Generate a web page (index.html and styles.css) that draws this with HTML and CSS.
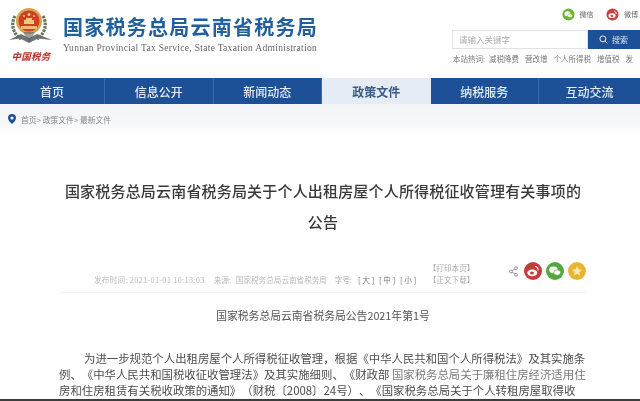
FILE: index.html
```html
<!DOCTYPE html>
<html lang="zh-CN">
<head>
<meta charset="utf-8">
<title>国家税务总局云南省税务局</title>
<link rel="stylesheet" href="styles.css">
</head>
<body>
<div class="page">
  <header class="header">
    <div class="brand">
      <div class="logo">
        <svg class="emblem" viewBox="0 0 44 40" width="44" height="40">
          <path d="M0 33 L12 27 L20 31 L28 27 L43 33 L29 31.500 L20 36 L11 31.500 Z" fill="#6f7478"/>
          <path d="M6 9 C2 16 3 26 12 32 M34 9 C38 16 37 26 28 32" fill="none" stroke="#66735a" stroke-width="3.200" stroke-dasharray="2.500 1"/>
          <circle cx="20" cy="14" r="13" fill="#d9a24c"/>
          <circle cx="20" cy="14" r="10.500" fill="#cf3f27"/>
          <path d="M12 19h16v3H12z" fill="#e8c06a"/>
          <path d="M15 17v-4h10v4zM17 13v-2h6v2z" fill="#eec877"/>
          <circle cx="20" cy="7.500" r="1.500" fill="#f2d27f"/>
          <circle cx="15" cy="9" r=".9" fill="#f2d27f"/>
          <circle cx="25" cy="9" r=".9" fill="#f2d27f"/>
          <path d="M14 25 L20 36 L26 25 Z" fill="#5d6468" opacity=".6"/>
        </svg>
        <div class="slogan">中国税务</div>
      </div>
      <div class="brand-text">
        <div class="brand-title">国家税务总局云南省税务局</div>
        <div class="brand-en">Yunnan Provincial Tax Service, State Taxation Administration</div>
      </div>
    </div>
    <div class="tools">
      <div class="social">
        <span class="social-item">
          <svg class="social-icon" viewBox="0 0 14 14"><circle cx="7" cy="7" r="6.500" fill="#6cb52f"/><ellipse cx="6" cy="6.200" rx="3.400" ry="2.700" fill="#fff"/><ellipse cx="8.600" cy="8.200" rx="2.700" ry="2.100" fill="#fff" stroke="#6cb52f" stroke-width=".6"/></svg>
          微信
        </span>
        <span class="social-item">
          <svg class="social-icon" viewBox="0 0 14 14"><circle cx="7" cy="7" r="6.500" fill="#c9403f"/><ellipse cx="6.500" cy="8.300" rx="3.800" ry="2.600" fill="#fff"/><ellipse cx="6.300" cy="8.500" rx="1.500" ry="1.200" fill="#c9403f"/><path d="M8.500 3.500c1.500 0 2.700 1.200 2.500 3" fill="none" stroke="#fff"/></svg>
          微博
        </span>
      </div>
      <div class="search">
        <div class="search-input">请输入关键字</div>
        <div class="search-btn">
          <svg viewBox="0 0 10 10" width="9" height="9"><circle cx="4.300" cy="4.300" r="3.300" fill="none" stroke="#fff" stroke-width="1"/><path d="M6.800 6.800L9.300 9.300" stroke="#fff" stroke-width="1"/></svg>
          搜索
        </div>
      </div>
      <div class="hot">
        <span class="hot-label">本站热词:</span><span>减税降费</span><span>营改增</span><span>个人所得税</span><span>增值税</span><span>发</span>
      </div>
    </div>
  </header>
  <nav class="nav">
    <a class="nav-item nav-a">首页</a>
    <a class="nav-item nav-b">信息公开</a>
    <a class="nav-item nav-b">新闻动态</a>
    <a class="nav-item nav-b active">政策文件</a>
    <a class="nav-item nav-b">纳税服务</a>
    <a class="nav-item nav-c">互动交流</a>
  </nav>
  <div class="crumbs">
    <svg class="pin" viewBox="0 0 8 10" width="8" height="10"><path d="M4 0a4 4 0 0 1 4 4c0 2.500-2.500 4.500-4 6C2.500 8.500 0 6.500 0 4a4 4 0 0 1 4-4z" fill="#1d5096"/><circle cx="4" cy="4" r="1.600" fill="#f3f5f7"/></svg>
    <span>首页&gt; 政策文件&gt; 最新文件</span>
  </div>
  <main class="article">
    <h1 class="title">国家税务总局云南省税务局关于个人出租房屋个人所得税征收管理有关事项的<br>公告</h1>
    <div class="meta">
      <span class="meta-date">发布时间: 2021-01-01 10:13:03</span>
      <span class="meta-source"><span class="source-label">来源:</span><span>国家税务总局云南省税务局</span></span>
      <span class="meta-size"><span class="size-label">字号:</span><b>[ 大 ]</b><b>[ 中 ]</b><b>[ 小 ]</b></span>
      <span class="meta-links"><span>【打印本页】</span><span>【正文下载】</span></span>
      <span class="share">
        <svg class="share-glyph" viewBox="0 0 10 12" width="9" height="11"><path d="M7.500 2.500L2.500 6L7.500 9.500" fill="none" stroke="#777" stroke-width=".8"/><circle cx="7.800" cy="2.300" r="1.600" fill="#fff" stroke="#777" stroke-width=".8"/><circle cx="2.200" cy="6" r="1.600" fill="#fff" stroke="#777" stroke-width=".8"/><circle cx="7.800" cy="9.700" r="1.600" fill="#fff" stroke="#777" stroke-width=".8"/></svg>
        <svg class="share-icon" viewBox="0 0 18 18"><circle cx="9" cy="9" r="9" fill="#c63c3b"/><ellipse cx="8.300" cy="10.800" rx="5" ry="3.400" fill="#fff"/><ellipse cx="8" cy="11" rx="2" ry="1.600" fill="#c63c3b"/><path d="M11 4.500c2 0 3.500 1.500 3 4" fill="none" stroke="#fff" stroke-width="1.100"/></svg>
        <svg class="share-icon" viewBox="0 0 18 18"><circle cx="9" cy="9" r="9" fill="#53a93f"/><ellipse cx="7.500" cy="7.800" rx="4.300" ry="3.400" fill="#fff"/><ellipse cx="11.200" cy="10.600" rx="3.500" ry="2.700" fill="#fff" stroke="#53a93f" stroke-width=".7"/></svg>
        <svg class="share-icon" viewBox="0 0 18 18"><circle cx="9" cy="9" r="9" fill="#e7b530"/><path d="M9 4l1.500 3.300 3.600.4-2.700 2.400.8 3.500L9 11.800l-3.200 1.800.8-3.500-2.700-2.400 3.600-.4z" fill="#f7e7ae"/></svg>
      </span>
    </div>
    <p class="doc-no">国家税务总局云南省税务局公告2021年第1号</p>
    <div class="body-text">
      <p class="line first">为进一步规范个人出租房屋个人所得税征收管理，根据《中华人民共和国个人所得税法》及其实施条</p>
      <p class="line">例、《中华人民共和国税收征收管理法》及其实施细则、《财政部 <span class="faded">国家税务总局关于廉租住房经济适用住</span></p>
      <p class="line">房和住房租赁有关税收政策的通知》（财税〔2008〕24号）、《国家税务总局关于个人转租房屋取得收</p>
    </div>
  </main>
  <div class="edge"></div>
</div>
</body>
</html>
```
FILE: styles.css
```css
* { box-sizing: border-box; margin: 0; padding: 0; }
html, body { width: 640px; height: 401px; overflow: hidden; background: #fff; }
body { font-family: "Noto Sans CJK SC", "Noto Sans", sans-serif; color: #444; text-spacing-trim: space-all; }
.page { width: 640px; height: 401px; display: flex; flex-direction: column; overflow: hidden; filter: blur(.55px); }

.header { height: 78px; flex: none; display: flex; justify-content: space-between; background: #fff; }
.brand { display: flex; padding: 7px 0 0 9px; gap: 10px; }
.logo { width: 44px; display: flex; flex-direction: column; align-items: center; }
.emblem { display: block; }
.slogan { font-size: 9.500px; line-height: 12px; margin-top: 3px; color: #b8312a; font-weight: 700; font-style: italic; white-space: nowrap; letter-spacing: .3px; }
.brand-text { padding-top: 7px; }
.brand-title { font-size: 20px; line-height: 26px; font-weight: 700; letter-spacing: 1.250px; color: #20609e; white-space: nowrap; }
.brand-en { font-family: "Liberation Serif", serif; font-size: 9.500px; line-height: 12px; margin-top: 2px; color: #666; white-space: nowrap; letter-spacing: .3px; }

.tools { width: 188px; display: flex; flex-direction: column; }
.social { height: 30px; padding: 7px 0 0 109.500px; display: flex; gap: 12.500px; }
.social-item { display: flex; align-items: center; gap: 5px; height: 14px; font-size: 7px; color: #666; white-space: nowrap; }
.social-icon { width: 13px; height: 13px; flex: none; }
.search { height: 19px; display: flex; }
.search-input { width: 136px; border: 1px solid #dfe3e8; font-size: 8.500px; line-height: 17px; padding-left: 6px; color: #aaa; }
.search-btn { flex: 1; background: #1d5096; color: #dbe5f2; font-size: 8px; display: flex; align-items: center; padding-left: 11px; gap: 4px; }
.hot { margin-top: 3px; padding-left: 1px; display: flex; gap: 6px; font-size: 7.500px; line-height: 14px; color: #777; white-space: nowrap; overflow: hidden; }
.hot-label { margin-right: -2px; }

.nav { height: 26px; flex: none; display: flex; background: #1d5096; }
.nav-item { display: flex; align-items: center; justify-content: center; font-size: 12px; font-weight: 500; color: #e3ebf5; border-right: 1px solid #3a6cab; }
.nav-a { width: 105px; }
.nav-b { width: 108.500px; }
.nav-c { flex: 1; border-right: 0; }
.active { background: #e6ecf4; color: #3b5a86; font-weight: 700; border-right: 0; }

.crumbs { height: 31px; flex: none; display: flex; align-items: center; gap: 5px; padding: 0 0 1px 8px; font-size: 7.800px; color: #888; background: linear-gradient(#f2f4f5, #f7f8f9 70%, #fff); }

.article { flex: 1; padding: 0 54px 0 59px; background: #fff; }
.title { margin-top: 40px; padding-left: 1px; font-size: 15px; line-height: 31px; font-weight: 500; color: #3a3a3a; text-align: center; letter-spacing: .18px; white-space: nowrap; }
.meta { margin-top: 25px; height: 31px; padding: 0 0 6px 35px; display: flex; align-items: flex-end; font-size: 7.600px; line-height: 12px; color: #bbb; white-space: nowrap; border-bottom: 1px solid #f4f4f4; }
.meta-date { width: 121px; letter-spacing: .25px; }
.meta-source { width: 122px; display: flex; }
.source-label { width: 22px; }
.meta-size { width: 95px; display: flex; color: #aaa; }
.size-label { width: 21px; }
.meta-size b { width: 21px; font-weight: 400; color: #777; text-align: center; }
.meta-links { width: 81px; display: flex; flex-direction: column; color: #aaa; }
.share { align-self: flex-start; display: flex; align-items: center; gap: 4px; }
.share-icon { width: 18px; height: 18px; display: block; }
.share-glyph { margin-right: 2px; }
.doc-no { margin-top: 14px; font-size: 10.800px; line-height: 16px; color: #555; text-align: center; padding-left: 1px; }
.body-text { margin-top: 27px; }
.line { font-size: 11.400px; line-height: 16px; color: #4d4d4d; white-space: nowrap; }
.first { padding-left: 25px; }
.faded { opacity: .75; }
.edge { height: 2px; flex: none; background: #3a3f3e; }
```
